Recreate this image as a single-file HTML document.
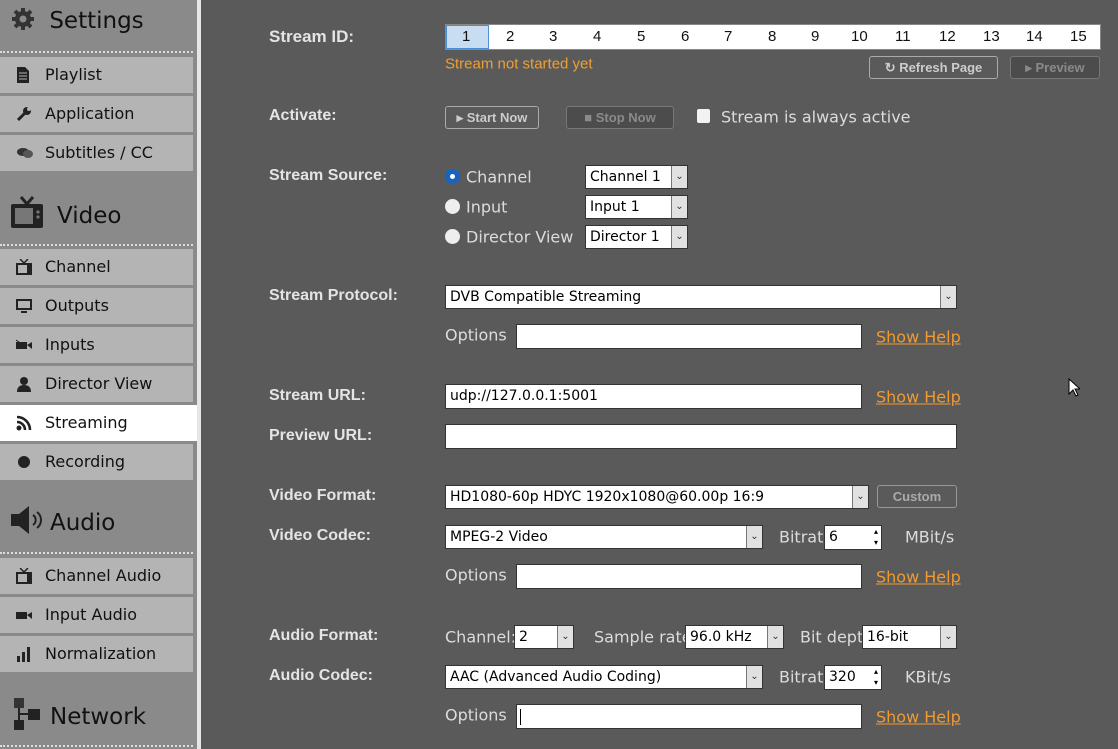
<!DOCTYPE html><html><head><meta charset="utf-8"><style>
*{margin:0;padding:0;box-sizing:border-box}
body{width:1118px;height:749px;overflow:hidden;background:#5a5a5a;font-family:"DejaVu Sans","Liberation Sans",sans-serif;position:relative}
.a{position:absolute}
#sb{left:0;top:0;width:197px;height:749px;background:#8a8a8a}
#strip{left:197px;top:0;width:4px;height:749px;background:#e6e6e6}
.hd{position:absolute;left:0;width:193px;font-size:23px;color:#111}
.dot{position:absolute;left:0;width:193px;border-top:2px dotted #ddd}
.it{position:absolute;left:0;width:193px;height:36px;background:#b4b4b4;font-size:16px;color:#111;line-height:36px;padding-left:45px}
.it svg{position:absolute;left:16px;top:10px}
.lbl{position:absolute;left:269px;font-weight:bold;font-size:16px;color:#e4e4e4;font-family:"Liberation Sans",sans-serif;transform:translateY(-50%)}
.t{position:absolute;font-size:16px;color:#dcdcdc;transform:translateY(-50%);white-space:nowrap}
.box{position:absolute;background:#fff;border:1px solid #333;font-size:14px;color:#000;padding-left:4px;white-space:nowrap;overflow:hidden}
.dd{position:absolute;right:0;top:0;bottom:0;width:16px;background:#e1e1e1;border-left:1px solid #777;font-size:10px;text-align:center;color:#333}
.help{position:absolute;left:876px;color:#f09a30;text-decoration:underline;font-size:16px;transform:translateY(-50%)}
.btn{position:absolute;border:1px solid #aaa;border-radius:3px;font-size:13px;font-weight:bold;color:#ccc;text-align:center;font-family:"Liberation Sans",sans-serif}
</style></head><body>
<div id="sb" class="a"></div><div id="strip" class="a"></div>

<div class="hd" style="top:6px;left:10px">
<svg width="26" height="26" viewBox="0 0 26 26" style="vertical-align:-4px"><g fill="#333"><circle cx="13" cy="13" r="8"/><g stroke="#333" stroke-width="4"><line x1="13" y1="2" x2="13" y2="24"/><line x1="2" y1="13" x2="24" y2="13"/><line x1="5" y1="5" x2="21" y2="21"/><line x1="21" y1="5" x2="5" y2="21"/></g><circle cx="13" cy="13" r="3.5" fill="#8a8a8a"/></g></svg>
<span style="margin-left:6px">Settings</span></div>
<div class="dot" style="top:51px"></div>
<div class="it" style="top:57px"><svg width="14" height="16"><path d="M1 0h8l4 4v12H1z" fill="#222"/><path d="M3 6h8M3 9h8M3 12h8" stroke="#b4b4b4"/></svg>Playlist</div>
<div class="it" style="top:96px"><svg width="16" height="16"><path d="M2 14l8-8" stroke="#222" stroke-width="3"/><circle cx="11" cy="5" r="4" fill="#222"/><circle cx="13" cy="3" r="2" fill="#b4b4b4"/></svg>Application</div>
<div class="it" style="top:135px"><svg width="18" height="16"><ellipse cx="7" cy="7" rx="6" ry="4" fill="#333"/><ellipse cx="12" cy="9" rx="5" ry="4" fill="#555"/></svg>Subtitles / CC</div>

<div class="hd" style="top:195px;left:10px"><svg width="34" height="34" viewBox="0 0 34 34" style="vertical-align:-6px"><path d="M11 2l6 7 6-7" stroke="#222" stroke-width="3" fill="none"/><rect x="1" y="9" width="32" height="24" rx="2" fill="#222"/><rect x="5" y="13" width="18" height="16" fill="#777"/><circle cx="28" cy="17" r="1.6" fill="#777"/><circle cx="28" cy="22" r="1.6" fill="#777"/></svg><span style="margin-left:13px">Video</span></div>
<div class="dot" style="top:244px"></div>
<div class="it" style="top:249px"><svg width="16" height="16"><path d="M4 0l4 4 4-4" stroke="#222" stroke-width="1.5" fill="none"/><rect x="0" y="4" width="16" height="12" fill="#222"/><rect x="2" y="6" width="9" height="8" fill="#b4b4b4"/></svg>Channel</div>
<div class="it" style="top:288px"><svg width="16" height="16"><rect x="0" y="1" width="16" height="11" fill="#222"/><rect x="2" y="3" width="12" height="7" fill="#b4b4b4"/><rect x="5" y="13" width="6" height="2" fill="#222"/></svg>Outputs</div>
<div class="it" style="top:327px"><svg width="16" height="16"><rect x="0" y="5" width="11" height="7" fill="#222"/><path d="M11 8l5-3v7z" fill="#222"/><path d="M0 3l3 2" stroke="#222"/></svg>Inputs</div>
<div class="it" style="top:366px"><svg width="16" height="16"><circle cx="8" cy="5" r="4" fill="#222"/><path d="M1 16q0-7 7-7t7 7z" fill="#222"/></svg>Director View</div>
<div class="it" style="top:405px;background:#fff;width:197px"><svg width="16" height="16"><circle cx="3" cy="13" r="2.5" fill="#222"/><path d="M1 7a8 8 0 0 1 8 8M1 2a13 13 0 0 1 13 13" stroke="#222" stroke-width="2.6" fill="none"/></svg>Streaming</div>
<div class="it" style="top:444px"><svg width="16" height="16"><circle cx="8" cy="8" r="6" fill="#222"/></svg>Recording</div>

<div class="hd" style="top:505px;left:10px"><svg width="34" height="30" viewBox="0 0 34 30" style="vertical-align:-5px"><path d="M1 9h8l10-8v28L9 21H1z" fill="#222"/><path d="M23 10a6 6 0 0 1 0 10M27 7a10 10 0 0 1 0 16" stroke="#222" stroke-width="2" fill="none"/></svg><span style="margin-left:6px">Audio</span></div>
<div class="dot" style="top:552px"></div>
<div class="it" style="top:558px"><svg width="16" height="16"><path d="M4 0l4 4 4-4" stroke="#222" stroke-width="1.5" fill="none"/><rect x="0" y="4" width="16" height="12" fill="#222"/><rect x="2" y="6" width="9" height="8" fill="#b4b4b4"/></svg>Channel Audio</div>
<div class="it" style="top:597px"><svg width="16" height="16"><rect x="0" y="5" width="11" height="7" fill="#222"/><path d="M11 8l5-3v7z" fill="#222"/></svg>Input Audio</div>
<div class="it" style="top:636px"><svg width="16" height="16"><rect x="1" y="10" width="3" height="6" fill="#222"/><rect x="6" y="6" width="3" height="10" fill="#222"/><rect x="11" y="1" width="3" height="15" fill="#222"/></svg>Normalization</div>

<div class="hd" style="top:698px;left:13px"><svg width="28" height="32" viewBox="0 0 28 32" style="vertical-align:-6px"><rect x="1" y="0" width="10" height="10" fill="#333"/><rect x="15" y="11" width="12" height="11" fill="#222"/><rect x="1" y="22" width="10" height="10" fill="#222"/><path d="M6 10v6h9M6 22v-6" stroke="#222" stroke-width="2" fill="none"/></svg><span style="margin-left:9px">Network</span></div>
<div class="dot" style="top:745px"></div>

<!-- main -->
<div class="lbl" style="top:37px;font-size:17px">Stream ID:</div>
<div class="a" style="left:445px;top:24px;width:656px;height:26px;background:#fff;border:1px solid #888"></div>
<div class="a" style="left:446px;top:25px;width:43px;height:24px;background:#c9ddf2;border:1px solid #4a90d8"></div>
<div class="a" style="left:445px;top:28px;width:656px;font-size:15px;color:#111;font-family:'Liberation Sans',sans-serif">
<span class="a" style="left:17px">1</span><span class="a" style="left:61px">2</span><span class="a" style="left:104px">3</span><span class="a" style="left:148px">4</span><span class="a" style="left:192px">5</span><span class="a" style="left:236px">6</span><span class="a" style="left:279px">7</span><span class="a" style="left:323px">8</span><span class="a" style="left:366px">9</span><span class="a" style="left:406px">10</span><span class="a" style="left:450px">11</span><span class="a" style="left:494px">12</span><span class="a" style="left:538px">13</span><span class="a" style="left:581px">14</span><span class="a" style="left:625px">15</span></div>
<div class="t" style="left:445px;top:64px;color:#f0a030;font-size:15px;font-family:'Liberation Sans',sans-serif">Stream not started yet</div>
<div class="btn" style="left:869px;top:56px;width:129px;height:23px;line-height:21px">↻ Refresh Page</div>
<div class="btn" style="left:1010px;top:56px;width:90px;height:23px;line-height:21px;background:#4c4c4c;border-color:#777;color:#8a8a8a">▸ Preview</div>

<div class="lbl" style="top:116px">Activate:</div>
<div class="btn" style="left:445px;top:106px;width:94px;height:23px;line-height:21px">▸ Start Now</div>
<div class="btn" style="left:566px;top:106px;width:108px;height:23px;line-height:21px;background:#4c4c4c;border-color:#777;color:#8a8a8a">■ Stop Now</div>
<div class="a" style="left:697px;top:109px;width:13px;height:14px;background:#f2f2f2;border-radius:2px"></div>
<div class="t" style="left:721px;top:117px">Stream is always active</div>

<div class="lbl" style="top:176px">Stream Source:</div>
<div class="a" style="left:445px;top:169px;width:15px;height:15px;border-radius:50%;background:#1565c0"></div><div class="a" style="left:450px;top:174px;width:5px;height:5px;border-radius:50%;background:#fff"></div>
<div class="a" style="left:445px;top:199px;width:15px;height:15px;border-radius:50%;background:#eee"></div>
<div class="a" style="left:445px;top:229px;width:15px;height:15px;border-radius:50%;background:#eee"></div>
<div class="t" style="left:466px;top:177px">Channel</div>
<div class="t" style="left:466px;top:207px">Input</div>
<div class="t" style="left:466px;top:237px">Director View</div>
<div class="box" style="left:585px;top:165px;width:103px;height:24px;line-height:22px">Channel 1<span class="dd">⌄</span></div>
<div class="box" style="left:585px;top:195px;width:103px;height:24px;line-height:22px">Input 1<span class="dd">⌄</span></div>
<div class="box" style="left:585px;top:225px;width:103px;height:24px;line-height:22px">Director 1<span class="dd">⌄</span></div>

<div class="lbl" style="top:296px">Stream Protocol:</div>
<div class="box" style="left:445px;top:285px;width:512px;height:24px;line-height:22px">DVB Compatible Streaming<span class="dd">⌄</span></div>
<div class="t" style="left:445px;top:335px">Options</div>
<div class="box" style="left:516px;top:324px;width:346px;height:25px"></div>
<div class="help" style="top:337px">Show Help</div>

<div class="lbl" style="top:396px">Stream URL:</div>
<div class="box" style="left:445px;top:384px;width:417px;height:25px;line-height:23px">udp://127.0.0.1:5001</div>
<div class="help" style="top:397px">Show Help</div>
<div class="lbl" style="top:436px">Preview URL:</div>
<div class="box" style="left:445px;top:424px;width:512px;height:25px"></div>

<div class="lbl" style="top:496px">Video Format:</div>
<div class="box" style="left:445px;top:485px;width:424px;height:24px;line-height:22px">HD1080-60p HDYC 1920x1080@60.00p 16:9<span class="dd">⌄</span></div>
<div class="btn" style="left:877px;top:485px;width:80px;height:23px;line-height:21px;color:#aaa;border-color:#999">Custom</div>
<div class="lbl" style="top:536px">Video Codec:</div>
<div class="box" style="left:445px;top:525px;width:318px;height:24px;line-height:22px">MPEG-2 Video<span class="dd">⌄</span></div>
<div class="t" style="left:779px;top:537px">Bitrate:</div>
<div class="box" style="left:824px;top:525px;width:58px;height:25px;line-height:23px">6<span class="a" style="right:3px;top:0;font-size:8px;line-height:11px">▴<br>▾</span></div>
<div class="t" style="left:905px;top:537px">MBit/s</div>
<div class="t" style="left:445px;top:575px">Options</div>
<div class="box" style="left:516px;top:564px;width:346px;height:25px"></div>
<div class="help" style="top:577px">Show Help</div>

<div class="lbl" style="top:636px">Audio Format:</div>
<div class="t" style="left:445px;top:637px">Channel:</div>
<div class="box" style="left:514px;top:625px;width:60px;height:24px;line-height:22px">2<span class="dd">⌄</span></div>
<div class="t" style="left:594px;top:637px">Sample rate:</div>
<div class="box" style="left:685px;top:625px;width:99px;height:24px;line-height:22px">96.0 kHz<span class="dd">⌄</span></div>
<div class="t" style="left:800px;top:637px">Bit depth:</div>
<div class="box" style="left:862px;top:625px;width:95px;height:24px;line-height:22px">16-bit<span class="dd">⌄</span></div>
<div class="lbl" style="top:676px">Audio Codec:</div>
<div class="box" style="left:445px;top:665px;width:318px;height:24px;line-height:22px">AAC (Advanced Audio Coding)<span class="dd">⌄</span></div>
<div class="t" style="left:779px;top:677px">Bitrate:</div>
<div class="box" style="left:824px;top:665px;width:58px;height:25px;line-height:23px">320<span class="a" style="right:3px;top:0;font-size:8px;line-height:11px">▴<br>▾</span></div>
<div class="t" style="left:905px;top:677px">KBit/s</div>
<div class="t" style="left:445px;top:715px">Options</div>
<div class="box" style="left:516px;top:704px;width:346px;height:25px"><span class="a" style="left:3px;top:4px;width:1px;height:16px;background:#000"></span></div>
<div class="help" style="top:717px">Show Help</div>

<svg class="a" style="left:1068px;top:378px" width="12" height="19"><path d="M1 1v15l4-4 3 6 2-1-3-6h5z" fill="#fff" stroke="#000"/></svg>
</body></html>
